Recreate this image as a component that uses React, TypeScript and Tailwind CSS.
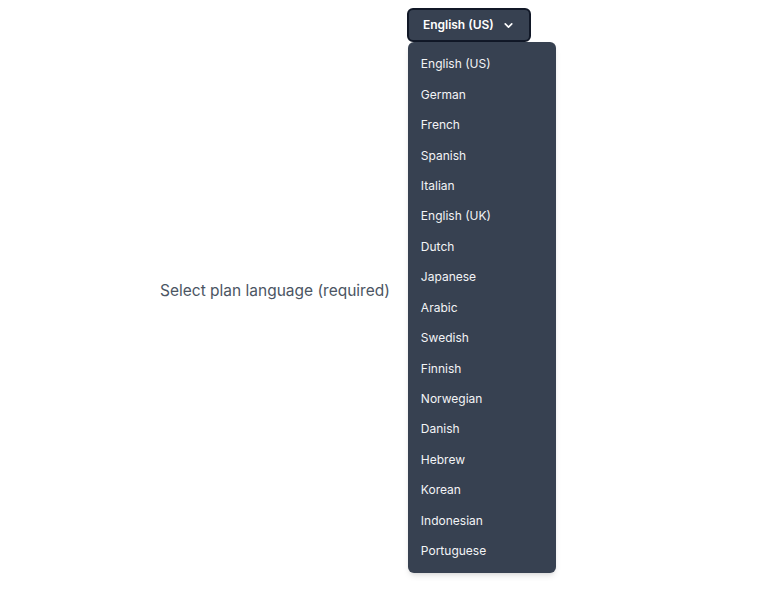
import { ChevronDown } from "lucide-react";

const languages = [
  "English (US)",
  "German",
  "French",
  "Spanish",
  "Italian",
  "English (UK)",
  "Dutch",
  "Japanese",
  "Arabic",
  "Swedish",
  "Finnish",
  "Norwegian",
  "Danish",
  "Hebrew",
  "Korean",
  "Indonesian",
  "Portuguese",
];

const App = () => {
  return (
    <div
      className="bg-white flex items-center pl-[160px] py-2"
      style={{ fontFamily: "Inter, 'Open Sans', sans-serif" }}
    >
      <label className="text-[15.5px] text-[#4b5563] mr-[17px]">
        Select plan language (required)
      </label>

      {/* Language select */}
      <div className="flex flex-col items-start">
        <button className="flex items-center gap-2 h-[34px] w-[124px] justify-center bg-[#374151] border-2 border-[#111827] rounded-md text-white text-[12px] font-semibold">
          English (US)
          <ChevronDown size={13} strokeWidth={3} />
        </button>
        <ul className="ml-px w-[148px] bg-[#374151] rounded-md shadow-md py-[7px]">
          {languages.map((lang) => (
            <li
              key={lang}
              className="h-[30.45px] flex items-center px-[13px] text-[12px] text-[#f3f4f6]"
            >
              {lang}
            </li>
          ))}
        </ul>
      </div>
    </div>
  );
};

export default App;
